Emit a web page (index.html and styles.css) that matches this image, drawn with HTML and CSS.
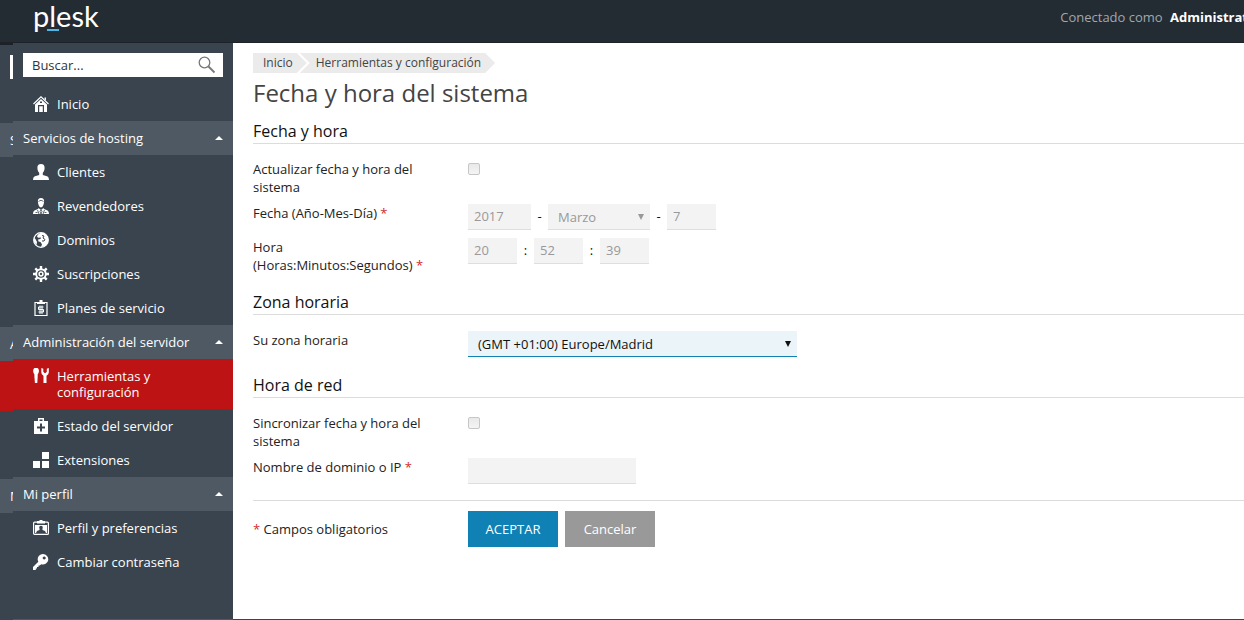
FILE: index.html
```html
<!DOCTYPE html>
<html lang="es">
<head>
<meta charset="utf-8">
<title>Fecha y hora del sistema - Plesk</title>
<link rel="stylesheet" href="styles.css">
</head>
<body>
<div class="page">
  <header class="topbar">
    <a class="logo" href="#">plesk</a>
    <p class="session"><span>Conectado como</span> <a class="user" href="#">Administrat</a></p>
  </header>
  <div class="layout">
    <div class="edge" aria-hidden="true">
      <div class="edge-search"></div>
      <div class="edge-section">S</div>
      <div class="edge-items"></div>
      <div class="edge-section">A</div>
      <div class="edge-active"></div>
      <div class="edge-pair"></div>
      <div class="edge-section">M</div>
    </div>
    <nav class="sidebar">
      <form class="search">
        <input class="search-input" type="text" aria-label="Buscar" placeholder="Buscar...">
        <button class="search-button" type="button" aria-label="Buscar">
          <svg width="18" height="18" viewBox="0 0 18 18" fill="none" stroke="#777"><circle cx="6.500" cy="6.500" r="5.300" stroke-width="1.300"/><path d="M10.500 10.500l6 6" stroke-width="1.800"/></svg>
        </button>
      </form>
      <a class="item" href="#">
        <svg class="icon" viewBox="0 0 16 16"><path d="M0.500 8L8 .8 15.500 8" fill="none" stroke="#fff" stroke-width="1.200"/><path fill="#fff" fill-rule="evenodd" d="M11.500 1.500H13v3l-1.500-1.400zM8 3l6 5.500V16h-3V9H5v7H2V8.500zM7 5.500V7h2V5.500zM6.200 10.200h3.600V16H6.200z"/></svg>
        <span>Inicio</span></a>
      <button class="section" type="button"><span>Servicios de hosting</span><i class="caret"></i></button>
      <a class="item" href="#">
        <svg class="icon" viewBox="0 0 16 16" fill="#fff"><path d="M8 0c2.500 0 3.700 1.600 3.600 4-.1 2.400-.9 4-1.800 4.800V11l4.200 1.300c1.200.4 1.800 1.200 2 3.700H0c.2-2.500.8-3.300 2-3.700L6.200 11V8.800C5.300 8 4.500 6.400 4.400 4 4.300 1.600 5.500 0 8 0z"/></svg>
        <span>Clientes</span></a>
      <a class="item" href="#">
        <svg class="icon" viewBox="0 0 16 16"><path fill="#fff" d="M8 0c2.200 0 3.300 1.300 3.100 3.500C11 6.500 9.500 9.500 8 9.500S5 6.500 4.900 3.500C4.700 1.300 5.800 0 8 0z"/><path d="M5.500 3.500c1-.2 1.300-1.200 2.500-1.200s1.500 1 2.500 1.200" stroke="#39444f" stroke-width=".8" fill="none"/><path fill="#fff" d="M5.500 10L8 12l2.500-2L11 11l3 1.200c1.300.6 1.800 1.500 2 3.800H0c.2-2.300.7-3.200 2-3.800L5 11z"/><path d="M4.500 12l1.500 4M11.500 12L10 16M2.500 14.500h2M11.500 14.500h2M8 12l-1 1.500L8 16l1-2.500z" stroke="#39444f" stroke-width=".8" fill="none"/></svg>
        <span>Revendedores</span></a>
      <a class="item" href="#">
        <svg class="icon" viewBox="0 0 16 16"><circle cx="8" cy="8" r="7.300" fill="#39444f" stroke="#fff" stroke-width="1.300"/><path fill="#fff" d="M5 2.500L7.500 1h4l3.500 4v6l-3.500 3.500L8 15l1-2.500L7.500 10l-2-.5L5 7.500 7.500 7l.5-1.500-3 .2-1-1.500zM1 6l1.500 1L4 10l-.5 3L1 10z"/><path d="M9 3.500l2 .5-1 2 2 1.500-1 1.500H9" stroke="#39444f" fill="none"/></svg>
        <span>Dominios</span></a>
      <a class="item" href="#">
        <svg class="icon" viewBox="0 0 16 16" fill="none" stroke="#fff"><circle cx="8" cy="8" r="4.800" stroke-width="1.900"/><circle cx="8" cy="8" r="1.900" stroke-width="1.500"/><path d="M8 0v3M8 13v3M0 8h3M13 8h3M2.300 2.300l2 2M11.700 11.700l2 2M2.300 13.700l2-2M11.700 4.300l2-2" stroke-width="2.400"/></svg>
        <span>Suscripciones</span></a>
      <a class="item" href="#">
        <svg class="icon" viewBox="0 0 16 16" fill="none" stroke="#fff"><path d="M2 2.500h12v13H2z" stroke-width="1.200"/><path fill="#fff" stroke="none" d="M4 2h2.500V0h3v2H12v2H4z"/><path d="M10.500 7h-5v2.500h5V12h-5M7 5.500V14M9 5.500V14"/></svg>
        <span>Planes de servicio</span></a>
      <button class="section" type="button"><span>Administración del servidor</span><i class="caret"></i></button>
      <a class="item item-active" href="#">
        <svg class="icon" viewBox="0 0 16 16" fill="#fff"><path d="M1.500 0h3C6 1 6.300 3 5.500 5L4.700 6.500v2L4.300 15H1.900L1.400 8.500v-2L.6 5C-.2 3 .2 1 1.500 0zM8.300 0v4c0 2 1 3 2.200 3.700V15h3V7.700c1.300-.7 2.300-1.700 2.300-3.700V0l-2 .8v3L12.500 5h-1L10.300 3.800v-3z"/></svg>
        <span>Herramientas y configuración</span></a>
      <a class="item" href="#">
        <svg class="icon" viewBox="0 0 16 16"><path fill="#fff" fill-rule="evenodd" d="M5 0h6v3h4v13H1V3h4zM6.500 1.500V3h3V1.500zM7 5.500V8.500H4v2h3v3h2v-3h3v-2H9v-3z"/></svg>
        <span>Estado del servidor</span></a>
      <a class="item" href="#">
        <svg class="icon" viewBox="0 0 16 16" fill="#fff"><path d="M9 0h7v7H9zM0 9h7v7H0zM9 9h7v7H9z"/></svg>
        <span>Extensiones</span></a>
      <button class="section" type="button"><span>Mi perfil</span><i class="caret"></i></button>
      <a class="item" href="#">
        <svg class="icon" viewBox="0 0 16 16"><rect x=".6" y="2.100" width="14.800" height="12.300" rx="1" fill="none" stroke="#fff" stroke-width="1.200"/><path fill="#fff" d="M4 1h2.500V0h3v1H12v2.500H4z"/><path fill="#fff" fill-rule="evenodd" d="M2 5h12v8H2zM8 5.800c-1.500 0-2.200 1.200-1.500 3V10L4 11l-1 2h10l-1-2-2.500-1V8.800c.7-1.800 0-3-1.500-3z"/></svg>
        <span>Perfil y preferencias</span></a>
      <a class="item" href="#">
        <svg class="icon" viewBox="0 0 16 16"><path fill="#fff" fill-rule="evenodd" d="M10 0a5.300 5.300 0 1 1-1.800 10.300L6.800 11.500H5.500V13H4v1.500H2.800V16H0v-3l5.300-5.200A5.300 5.300 0 0 1 10 0zM11.200 2.600a1.500 1.500 0 1 0 .01 0z"/></svg>
        <span>Cambiar contraseña</span></a>
    </nav>
    <main class="content">
      <nav class="crumbs" aria-label="Ruta">
        <a class="crumb" href="#">Inicio</a>
        <a class="crumb crumb-next" href="#">Herramientas y configuración</a>
      </nav>
      <h1>Fecha y hora del sistema</h1>
      <form>
        <section class="group">
          <h2>Fecha y hora</h2>
          <div class="row">
            <label for="update">Actualizar fecha y hora del sistema</label>
            <input class="check" id="update" type="checkbox">
          </div>
          <div class="row">
            <label for="year">Fecha (Año-Mes-Día) <b class="req">*</b></label>
            <div class="fields">
              <input class="field field-year" id="year" type="text" value="2017" disabled>
              <span class="sep">-</span>
              <span class="picker picker-month"><select aria-label="Mes" disabled><option>Marzo</option></select></span>
              <span class="sep">-</span>
              <input class="field" type="text" aria-label="Día" value="7" disabled>
            </div>
          </div>
          <div class="row">
            <label for="hour">Hora (Horas:Minutos:Segundos) <b class="req">*</b></label>
            <div class="fields">
              <input class="field" id="hour" type="text" value="20" disabled>
              <span class="sep">:</span>
              <input class="field" type="text" aria-label="Minutos" value="52" disabled>
              <span class="sep">:</span>
              <input class="field" type="text" aria-label="Segundos" value="39" disabled>
            </div>
          </div>
        </section>
        <section class="group">
          <h2>Zona horaria</h2>
          <div class="row">
            <label for="zone">Su zona horaria</label>
            <span class="picker picker-zone"><select id="zone"><option>(GMT +01:00) Europe/Madrid</option></select></span>
          </div>
        </section>
        <section class="group">
          <h2>Hora de red</h2>
          <div class="row">
            <label for="sync">Sincronizar fecha y hora del sistema</label>
            <input class="check" id="sync" type="checkbox">
          </div>
          <div class="row">
            <label for="host">Nombre de dominio o IP <b class="req">*</b></label>
            <input class="field field-host" id="host" type="text" disabled>
          </div>
        </section>
        <div class="row actions">
          <p><b class="req">*</b> Campos obligatorios</p>
          <div class="buttons">
            <button class="btn btn-primary" type="button">ACEPTAR</button>
            <button class="btn" type="button">Cancelar</button>
          </div>
        </div>
      </form>
    </main>
  </div>
</div>
</body>
</html>
```
FILE: styles.css
```css
* { box-sizing: border-box; }

body {
  margin: 0;
  font: 13px/18px "Open Sans", "Noto Sans", sans-serif;
  color: #222;
  background: #fff;
}

h1, h2, p { margin: 0; font-weight: 400; }
a { color: inherit; text-decoration: none; }
button, input, select { font: inherit; margin: 0; }

.page { display: flex; flex-direction: column; min-height: 100vh; overflow: hidden; }

.topbar {
  display: flex;
  justify-content: space-between;
  height: 43px;
  padding-left: 33px;
  background: #232b33;
  border-bottom: 1px solid #1c2228;
}
.logo {
  position: relative;
  font: 400 29px/32px Lato, sans-serif;
  color: #fff;
}
.logo::after {
  content: "";
  position: absolute;
  left: 14px;
  top: 29px;
  width: 12px;
  height: 2px;
  background: #4cb8e8;
}
.session { margin-right: -4px; padding-top: 8px; color: #a3a7ab; white-space: nowrap; }
.user { margin-left: 4px; font-weight: 700; color: #fff; }

.layout { flex: 1; display: flex; }

/* Sliver of the collapsed menu along the left border */
.edge {
  width: 13px;
  overflow: hidden;
  color: #fff;
  background: #39444f;
  border-top: 2px solid #1c2228;
}
.edge-search { height: 24px; margin: 10px 0 44px 10px; background: #fff; }
.edge-section { height: 34px; padding-left: 10px; line-height: 34px; background: #4f5963; }
.edge-items { height: 170px; }
.edge-active { height: 50px; background: #bd1314; }
.edge-pair { height: 68px; }

.sidebar {
  flex: none;
  width: 220px;
  color: #fff;
  background: #39444f;
  border-bottom: 1px solid #4f5963;
}
.search { display: flex; height: 24px; margin: 10px; background: #fff; }
.search-input {
  flex: 1;
  min-width: 0;
  padding: 0 9px;
  border: 0;
  background: none;
}
.search-input::placeholder { color: #333; opacity: 1; }
.search-button { display: flex; align-items: center; padding: 0 7px; border: 0; background: none; }
.item { display: flex; gap: 8px; padding: 9px 40px 9px 20px; line-height: 16px; }
.item-active { background: #bd1314; }
.icon { flex: none; width: 16px; height: 16px; }
.section {
  display: flex;
  align-items: center;
  justify-content: space-between;
  width: 100%;
  height: 34px;
  padding: 0 10px;
  border: 0;
  color: #fff;
  background: #4f5963;
}
.caret { border: 4px solid transparent; border-top: 0; border-bottom-color: #fff; }

.content { flex: 1; min-width: 0; padding: 10px 0 0 20px; border-bottom: 1px solid #39444f; }

.crumbs { display: flex; font-size: 12px; line-height: 20px; color: #444; }
.crumb {
  padding: 0 14px 0 10px;
  background: #ebebeb;
  clip-path: polygon(0 0, calc(100% - 10px) 0, 100% 50%, calc(100% - 10px) 100%, 0 100%);
}
.crumb-next {
  margin-left: -7px;
  padding-left: 16px;
  clip-path: polygon(0 0, calc(100% - 10px) 0, 100% 50%, calc(100% - 10px) 100%, 0 100%, 10px 50%);
}

h1 { margin: 4px 0 11px; font-size: 24px; line-height: 32px; color: #444; }
h2 {
  margin-bottom: 16px;
  padding-bottom: 1px;
  border-bottom: 1px solid #dcdcdc;
  font-size: 16px;
  line-height: 22px;
  color: #111;
}

.group { margin-bottom: 17px; }
.row { display: grid; grid-template-columns: 185px 1fr; column-gap: 30px; justify-items: start; }
.row + .row { margin-top: 8px; }
.req { font-weight: 400; color: #d02c2c; }

.check {
  appearance: none;
  width: 12px;
  height: 12px;
  margin-top: 3px;
  border: 1px solid #c6c6c6;
  border-radius: 2px;
  background: linear-gradient(#e9e9e9, #f4f4f4);
}

.fields { display: flex; }
.sep { width: 17px; text-align: center; line-height: 24px; color: #111; }
.field {
  width: 49px;
  height: 26px;
  padding: 0 6px 2px;
  border: 0;
  border-bottom: 1px solid #dedede;
  color: #999;
  background: #f3f3f3;
}
.field-year { width: 63px; }
.field-host { width: 168px; }

.picker { position: relative; display: block; height: 26px; color: #111; }
.picker select {
  appearance: none;
  width: 100%;
  height: 26px;
  padding: 0 20px 0 10px;
  border: 0;
  border-bottom: 1px solid #0f81b4;
  border-radius: 0;
  color: inherit;
  opacity: 1;
  background: #ebf4f9;
}
.picker::after {
  content: "";
  position: absolute;
  right: 6px;
  top: 10px;
  border: 3px solid transparent;
  border-top: 6px solid;
  border-bottom: 0;
}
.picker-month { width: 102px; color: #999; }
.picker-month select { border-color: #dedede; background: #f3f3f3; }
.picker-zone { width: 329px; }

.actions { align-items: center; margin-top: -1px; padding-top: 10px; border-top: 1px solid #dcdcdc; }
.buttons { display: flex; gap: 7px; }
.btn { width: 90px; height: 36px; padding: 0; border: 0; color: #fff; background: #999; }
.btn-primary { background: #0f81b4; }
```
